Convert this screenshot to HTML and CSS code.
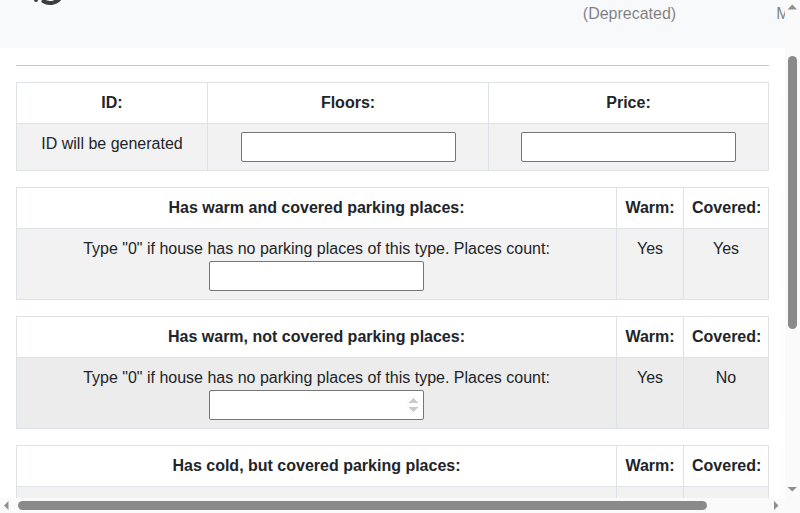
FILE: index.html
```html
<!DOCTYPE html>
<html lang="en">
<head>
<meta charset="utf-8">
<title>Add house</title>
<link rel="stylesheet" href="styles.css">
</head>
<body>
<div class="page">
<header class="navbar">
  <a class="brand" href="#">
    <svg class="logo" width="48" height="48" viewBox="0 0 48 48" aria-hidden="true">
      <path d="M17.5 43.3 A13 13 0 1 0 12.7 25.5" fill="none" stroke="#3d3d3d" stroke-width="4" stroke-linecap="round"/>
      <circle cx="10" cy="42" r="2" fill="#3d3d3d"/>
    </svg>
  </a>
  <nav class="nav">
    <a class="nav-link" href="#">Houses<br>(Deprecated)</a>
    <a class="nav-link" href="#">Manage</a>
  </nav>
</header>

<main class="container">
  <hr class="divider">

  <table class="grid">
    <colgroup><col class="c-id"><col class="c-floors"><col></colgroup>
    <thead>
      <tr><th>ID:</th><th>Floors:</th><th>Price:</th></tr>
    </thead>
    <tbody>
      <tr>
        <td>ID will be generated</td>
        <td><input class="field" type="text"></td>
        <td><input class="field" type="text"></td>
      </tr>
    </tbody>
  </table>

  <table class="grid">
    <colgroup><col><col class="c-warm"><col class="c-cov"></colgroup>
    <thead>
      <tr><th>Has warm and covered parking places:</th><th>Warm:</th><th>Covered:</th></tr>
    </thead>
    <tbody>
      <tr>
        <td><div>Type "0" if house has no parking places of this type. Places count:</div><input class="field" type="number"></td>
        <td>Yes</td>
        <td>Yes</td>
      </tr>
    </tbody>
  </table>

  <table class="grid">
    <colgroup><col><col class="c-warm"><col class="c-cov"></colgroup>
    <thead>
      <tr><th>Has warm, not covered parking places:</th><th>Warm:</th><th>Covered:</th></tr>
    </thead>
    <tbody>
      <tr class="is-hover">
        <td><div>Type "0" if house has no parking places of this type. Places count:</div><input class="field field-spin" type="number"></td>
        <td>Yes</td>
        <td>No</td>
      </tr>
    </tbody>
  </table>

  <table class="grid">
    <colgroup><col><col class="c-warm"><col class="c-cov"></colgroup>
    <thead>
      <tr><th>Has cold, but covered parking places:</th><th>Warm:</th><th>Covered:</th></tr>
    </thead>
    <tbody>
      <tr>
        <td><div>Type "0" if house has no parking places of this type. Places count:</div><input class="field" type="number"></td>
        <td>No</td>
        <td>Yes</td>
      </tr>
    </tbody>
  </table>

  <table class="grid">
    <colgroup><col><col class="c-warm"><col class="c-cov"></colgroup>
    <thead>
      <tr><th>Has cold, not covered parking places:</th><th>Warm:</th><th>Covered:</th></tr>
    </thead>
    <tbody>
      <tr>
        <td><div>Type "0" if house has no parking places of this type. Places count:</div><input class="field" type="number"></td>
        <td>No</td>
        <td>No</td>
      </tr>
    </tbody>
  </table>

  <div class="actions">
    <button class="btn" type="button">Save</button>
  </div>
</main>
</div>

<div class="sb sb-v" aria-hidden="true">
  <span class="sb-btn"><svg width="15" height="15" viewBox="0 0 15 15"><polygon points="2.5,9.5 12,9.5 7.25,4.5" fill="#8f8f8f"/></svg></span>
  <span class="sb-track"><span class="sb-thumb"></span></span>
  <span class="sb-btn"><svg width="15" height="15" viewBox="0 0 15 15"><polygon points="2.5,4 12,4 7.25,8.5" fill="#8f8f8f"/></svg></span>
</div>
<div class="sb sb-h" aria-hidden="true">
  <span class="sb-btn"><svg width="15" height="15" viewBox="0 0 15 15"><polygon points="8.5,3 4,7.5 8.5,12" fill="#8f8f8f"/></svg></span>
  <span class="sb-track"><span class="sb-thumb"></span></span>
  <span class="sb-btn"><svg width="15" height="15" viewBox="0 0 15 15"><polygon points="4,3 8.5,7.5 4,12" fill="#8f8f8f"/></svg></span>
</div>
<div class="sb-corner" aria-hidden="true"></div>

<script src="script.js"></script>
</body>
</html>
```

FILE: styles.css
```css
html, body {
  margin: 0;
  padding: 0;
}

body {
  font-family: "Liberation Sans", Arial, sans-serif;
  font-size: 16px;
  line-height: 24px;
  color: #212529;
  background: #ffffff;
}

.page {
  margin-right: 15px;
}

.navbar {
  box-sizing: border-box;
  min-width: 876px;
  height: 124px;
  background: #f8f9fa;
  display: flex;
  align-items: flex-end;
  padding: 0 34px 22px 26px;
}

.brand {
  align-self: flex-start;
  margin-top: 34px;
  display: block;
  line-height: 0;
}

.nav {
  margin-left: auto;
  display: flex;
  align-items: flex-end;
  gap: 84px;
}

.nav-link {
  display: block;
  padding: 0 8px;
  text-align: center;
  color: rgba(0, 0, 0, 0.5);
  text-decoration: none;
  white-space: nowrap;
}

.container {
  padding: 0 16px 40px;
}

.divider {
  margin: 17px 0 16px;
  border: 0;
  border-top: 1px solid #c8c8c8;
  height: 0;
}

.grid {
  width: 100%;
  border-collapse: collapse;
  table-layout: fixed;
  margin-bottom: 16px;
}

.grid th,
.grid td {
  border: 1px solid #dee2e6;
  padding: 8px;
  text-align: center;
  vertical-align: top;
  line-height: 24px;
}

.grid th {
  font-weight: bold;
  background: #ffffff;
}

.grid tbody tr {
  background: #f2f2f2;
}

.grid tbody tr.is-hover {
  background: #ececec;
}

.c-id { width: 191px; }
.c-floors { width: 281px; }
.c-warm { width: 67px; }
.c-cov { width: 85px; }

.field {
  display: block;
  box-sizing: border-box;
  width: 215px;
  height: 30px;
  margin: 0 auto;
  padding: 1px 2px;
  border: 1px solid #767676;
  border-radius: 2px;
  background: #ffffff;
  font: 16px "Liberation Sans", Arial, sans-serif;
}

.field::-webkit-inner-spin-button,
.field::-webkit-outer-spin-button {
  opacity: 0;
}

.field-spin::-webkit-inner-spin-button {
  opacity: 0.45;
}

.actions {
  padding: 8px 0;
}

.btn {
  font: 16px "Liberation Sans", Arial, sans-serif;
  padding: 6px 12px;
  line-height: 24px;
  color: #fff;
  background: #007bff;
  border: 1px solid #007bff;
  border-radius: 4px;
}

/* Scrollbars drawn over the page */
.sb {
  position: fixed;
  display: flex;
  background: #fafafa;
  z-index: 10;
}

.sb-v {
  top: 0;
  right: 0;
  width: 15px;
  height: 498px;
  flex-direction: column;
}

.sb-h {
  left: 0;
  bottom: 0;
  width: 785px;
  height: 15px;
  flex-direction: row;
}

.sb-btn {
  flex: 0 0 15px;
  width: 15px;
  height: 15px;
  display: block;
  line-height: 0;
}

.sb-track {
  flex: 1 1 auto;
  display: block;
}

.sb-thumb {
  display: block;
  background: #8a8a8a;
  border-radius: 5px;
}

.sb-v .sb-thumb {
  width: 9px;
  height: 273px;
  margin: 41px 0 0 3px;
}

.sb-h .sb-track {
  padding-top: 3px;
}

.sb-h .sb-thumb {
  width: 689px;
  height: 9px;
  margin-left: 3px;
}

.sb-corner {
  position: fixed;
  right: 0;
  bottom: 0;
  width: 15px;
  height: 15px;
  background: #fafafa;
  z-index: 10;
}
```

FILE: script.js
```js
window.scrollTo(0, 76);
window.addEventListener('load', function () {
  window.scrollTo(0, 76);
});
```
